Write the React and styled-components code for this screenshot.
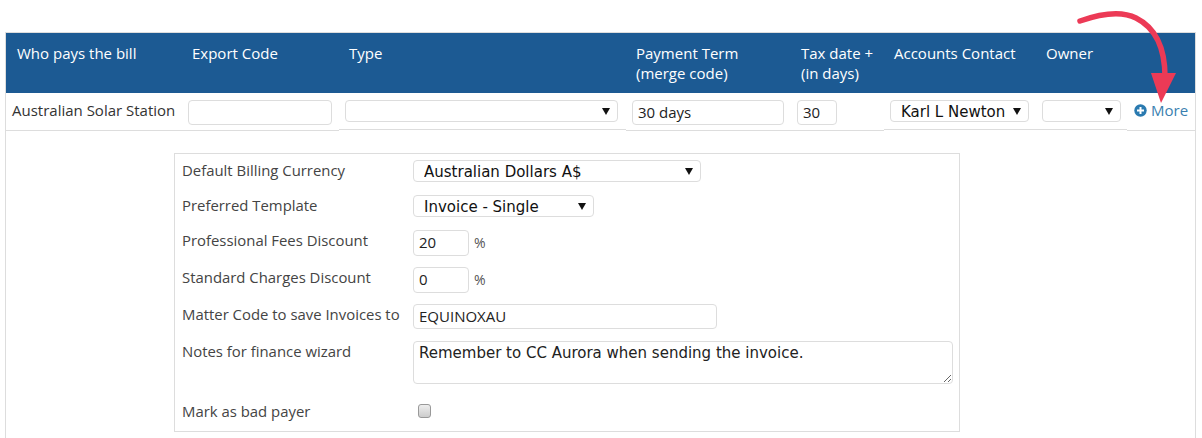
import React from "react";
import styled, { createGlobalStyle } from "styled-components";

const Global = createGlobalStyle`
  html, body { margin: 0; padding: 0; background: #fff; }
  body { font-family: "Open Sans", "Liberation Sans", sans-serif; font-size: 15px; color: #333; }
`;

const Page = styled.div`
  position: relative;
  width: 1202px;
  height: 438px;
  overflow: hidden;
  box-sizing: border-box;
  padding: 32px 6px 0 5px;
`;

const Panel = styled.div`
  border: 1px solid #ddd;
  height: 420px;
`;

const COLS = "176px 157px 287px 165px 93px 152px 91px 68px";

const HeaderRow = styled.div`
  display: grid;
  grid-template-columns: ${COLS};
  height: 60px;
  background: #1c5a93;
  color: #fff;
`;

const HeaderCell = styled.div`
  padding: 10px 0 0 ${(p) => p.$left || 10}px;
  line-height: 20px;
  font-size: 15px;
  white-space: nowrap;
`;

const DataRow = styled.div`
  display: grid;
  grid-template-columns: ${COLS};
  height: 38px;
`;

const DataCell = styled.div`
  box-sizing: border-box;
  padding: 7px 6px 0;
  height: ${(p) => (p.$short ? 37 : 38)}px;
  border-bottom: 1px solid #ddd;
`;

const RowLabel = styled.div`
  line-height: 20px;
  white-space: nowrap;
  color: #333;
`;

const TextInput = styled.input`
  display: block;
  box-sizing: border-box;
  width: ${(p) => p.$width}px;
  height: ${(p) => p.$height || 25}px;
  padding: 0 4px 2px 5px;
  border: 1px solid #ddd;
  border-radius: 4px;
  background: #fff;
  font: 15px "Open Sans", sans-serif;
  color: #222;
  outline: none;
`;

const SelectWrap = styled.div`
  position: relative;
  width: ${(p) => p.$width}px;
  height: 22px;
`;

const SelectBox = styled.select`
  display: block;
  appearance: none;
  box-sizing: border-box;
  width: 100%;
  height: 100%;
  padding: 1px 0 0 10px;
  border: 1px solid #ddd;
  border-radius: 4px;
  background: #fff;
  font: 15px "DejaVu Sans", sans-serif;
  color: #111;
  outline: none;
`;

const Caret = styled.svg`
  position: absolute;
  right: 8px;
  top: 8px;
  width: 8px;
  height: 7px;
  pointer-events: none;
`;

const Select = ({ width, value }) => (
  <SelectWrap $width={width}>
    <SelectBox defaultValue={value || ""}>
      <option value={value || ""}>{value || ""}</option>
    </SelectBox>
    <Caret viewBox="0 0 8 7">
      <path d="M0 0h8L4 7z" fill="#111" />
    </Caret>
  </SelectWrap>
);

const MoreLink = styled.a`
  display: flex;
  align-items: center;
  gap: 4px;
  margin-left: 1px;
  line-height: 20px;
  font-size: 15px;
  color: #3a7fb0;
  white-space: nowrap;
`;

const FormBox = styled.div`
  box-sizing: border-box;
  width: 786px;
  height: 279px;
  margin: 22px 0 0 168px;
  border: 1px solid #ddd;
  padding: 6px 0 0 7px;
`;

const FormRow = styled.div`
  display: flex;
  align-items: flex-start;
  height: ${(p) => p.$h}px;
`;

const FormLabel = styled.div`
  width: 231px;
  flex: none;
  line-height: 20px;
  font-size: 14.9px;
  white-space: nowrap;
  color: #444;
`;

const Percent = styled.span`
  margin-left: 5px;
  line-height: 26px;
  font-size: 14px;
  color: #555;
`;

const Notes = styled.textarea`
  display: block;
  box-sizing: border-box;
  width: 540px;
  height: 43px;
  padding: 2px 5px;
  border: 1px solid #ddd;
  border-radius: 4px;
  font: 15px "DejaVu Sans", sans-serif;
  color: #222;
  outline: none;
`;

const Check = styled.div`
  box-sizing: border-box;
  width: 13px;
  height: 14px;
  margin: 3px 0 0 5px;
  border: 1px solid #999;
  border-radius: 3px;
  background: linear-gradient(#eee, #ccc);
`;

const ArrowOverlay = styled.svg`
  position: absolute;
  left: 1070px;
  top: 5px;
  width: 110px;
  height: 112px;
  pointer-events: none;
`;

export default function App() {
  return (
    <Page>
      <Global />
      <Panel>
        <HeaderRow>
          <HeaderCell $left={11}>Who pays the bill</HeaderCell>
          <HeaderCell>Export Code</HeaderCell>
          <HeaderCell>Type</HeaderCell>
          <HeaderCell>Payment Term<br />(merge code)</HeaderCell>
          <HeaderCell>Tax date +<br />(in days)</HeaderCell>
          <HeaderCell>Accounts Contact</HeaderCell>
          <HeaderCell>Owner</HeaderCell>
          <HeaderCell />
        </HeaderRow>
        <DataRow>
          <DataCell><RowLabel>Australian Solar Station</RowLabel></DataCell>
          <DataCell><TextInput $width={144} /></DataCell>
          <DataCell $short><Select width={273} /></DataCell>
          <DataCell><TextInput $width={152} defaultValue="30 days" /></DataCell>
          <DataCell><TextInput $width={40} defaultValue="30" /></DataCell>
          <DataCell $short><Select width={139} value="Karl L Newton" /></DataCell>
          <DataCell $short><Select width={79} /></DataCell>
          <DataCell>
            <MoreLink>
              <svg width="13" height="13" viewBox="0 0 13 13">
                <circle cx="6.5" cy="6.5" r="6.2" fill="#2a7ab0" />
                <path d="M6.5 3v7M3 6.5h7" stroke="#fff" strokeWidth="2" />
              </svg>
              More
            </MoreLink>
          </DataCell>
        </DataRow>
        <FormBox>
          <FormRow $h={35}>
            <FormLabel>Default Billing Currency</FormLabel>
            <Select width={288} value="Australian Dollars A$" />
          </FormRow>
          <FormRow $h={35}>
            <FormLabel>Preferred Template</FormLabel>
            <Select width={181} value="Invoice - Single" />
          </FormRow>
          <FormRow $h={37}>
            <FormLabel>Professional Fees Discount</FormLabel>
            <TextInput $width={56} $height={26} defaultValue="20" />
            <Percent>%</Percent>
          </FormRow>
          <FormRow $h={37}>
            <FormLabel>Standard Charges Discount</FormLabel>
            <TextInput $width={56} $height={26} defaultValue="0" />
            <Percent>%</Percent>
          </FormRow>
          <FormRow $h={37}>
            <FormLabel>Matter Code to save Invoices to</FormLabel>
            <TextInput $width={304} defaultValue="EQUINOXAU" />
          </FormRow>
          <FormRow $h={60}>
            <FormLabel>Notes for finance wizard</FormLabel>
            <Notes defaultValue="Remember to CC Aurora when sending the invoice." />
          </FormRow>
          <FormRow $h={30}>
            <FormLabel>Mark as bad payer</FormLabel>
            <Check />
          </FormRow>
        </FormBox>
      </Panel>
      <ArrowOverlay viewBox="0 0 110 112">
        <path d="M10 16 C30 9 50 5 66 13 C88 24 95 46 95 72" fill="none" stroke="#ec3a56" strokeWidth="5.5" strokeLinecap="round" />
        <path d="M81 68 L106 68 L91 98 Z" fill="#ec3a56" />
      </ArrowOverlay>
    </Page>
  );
}
